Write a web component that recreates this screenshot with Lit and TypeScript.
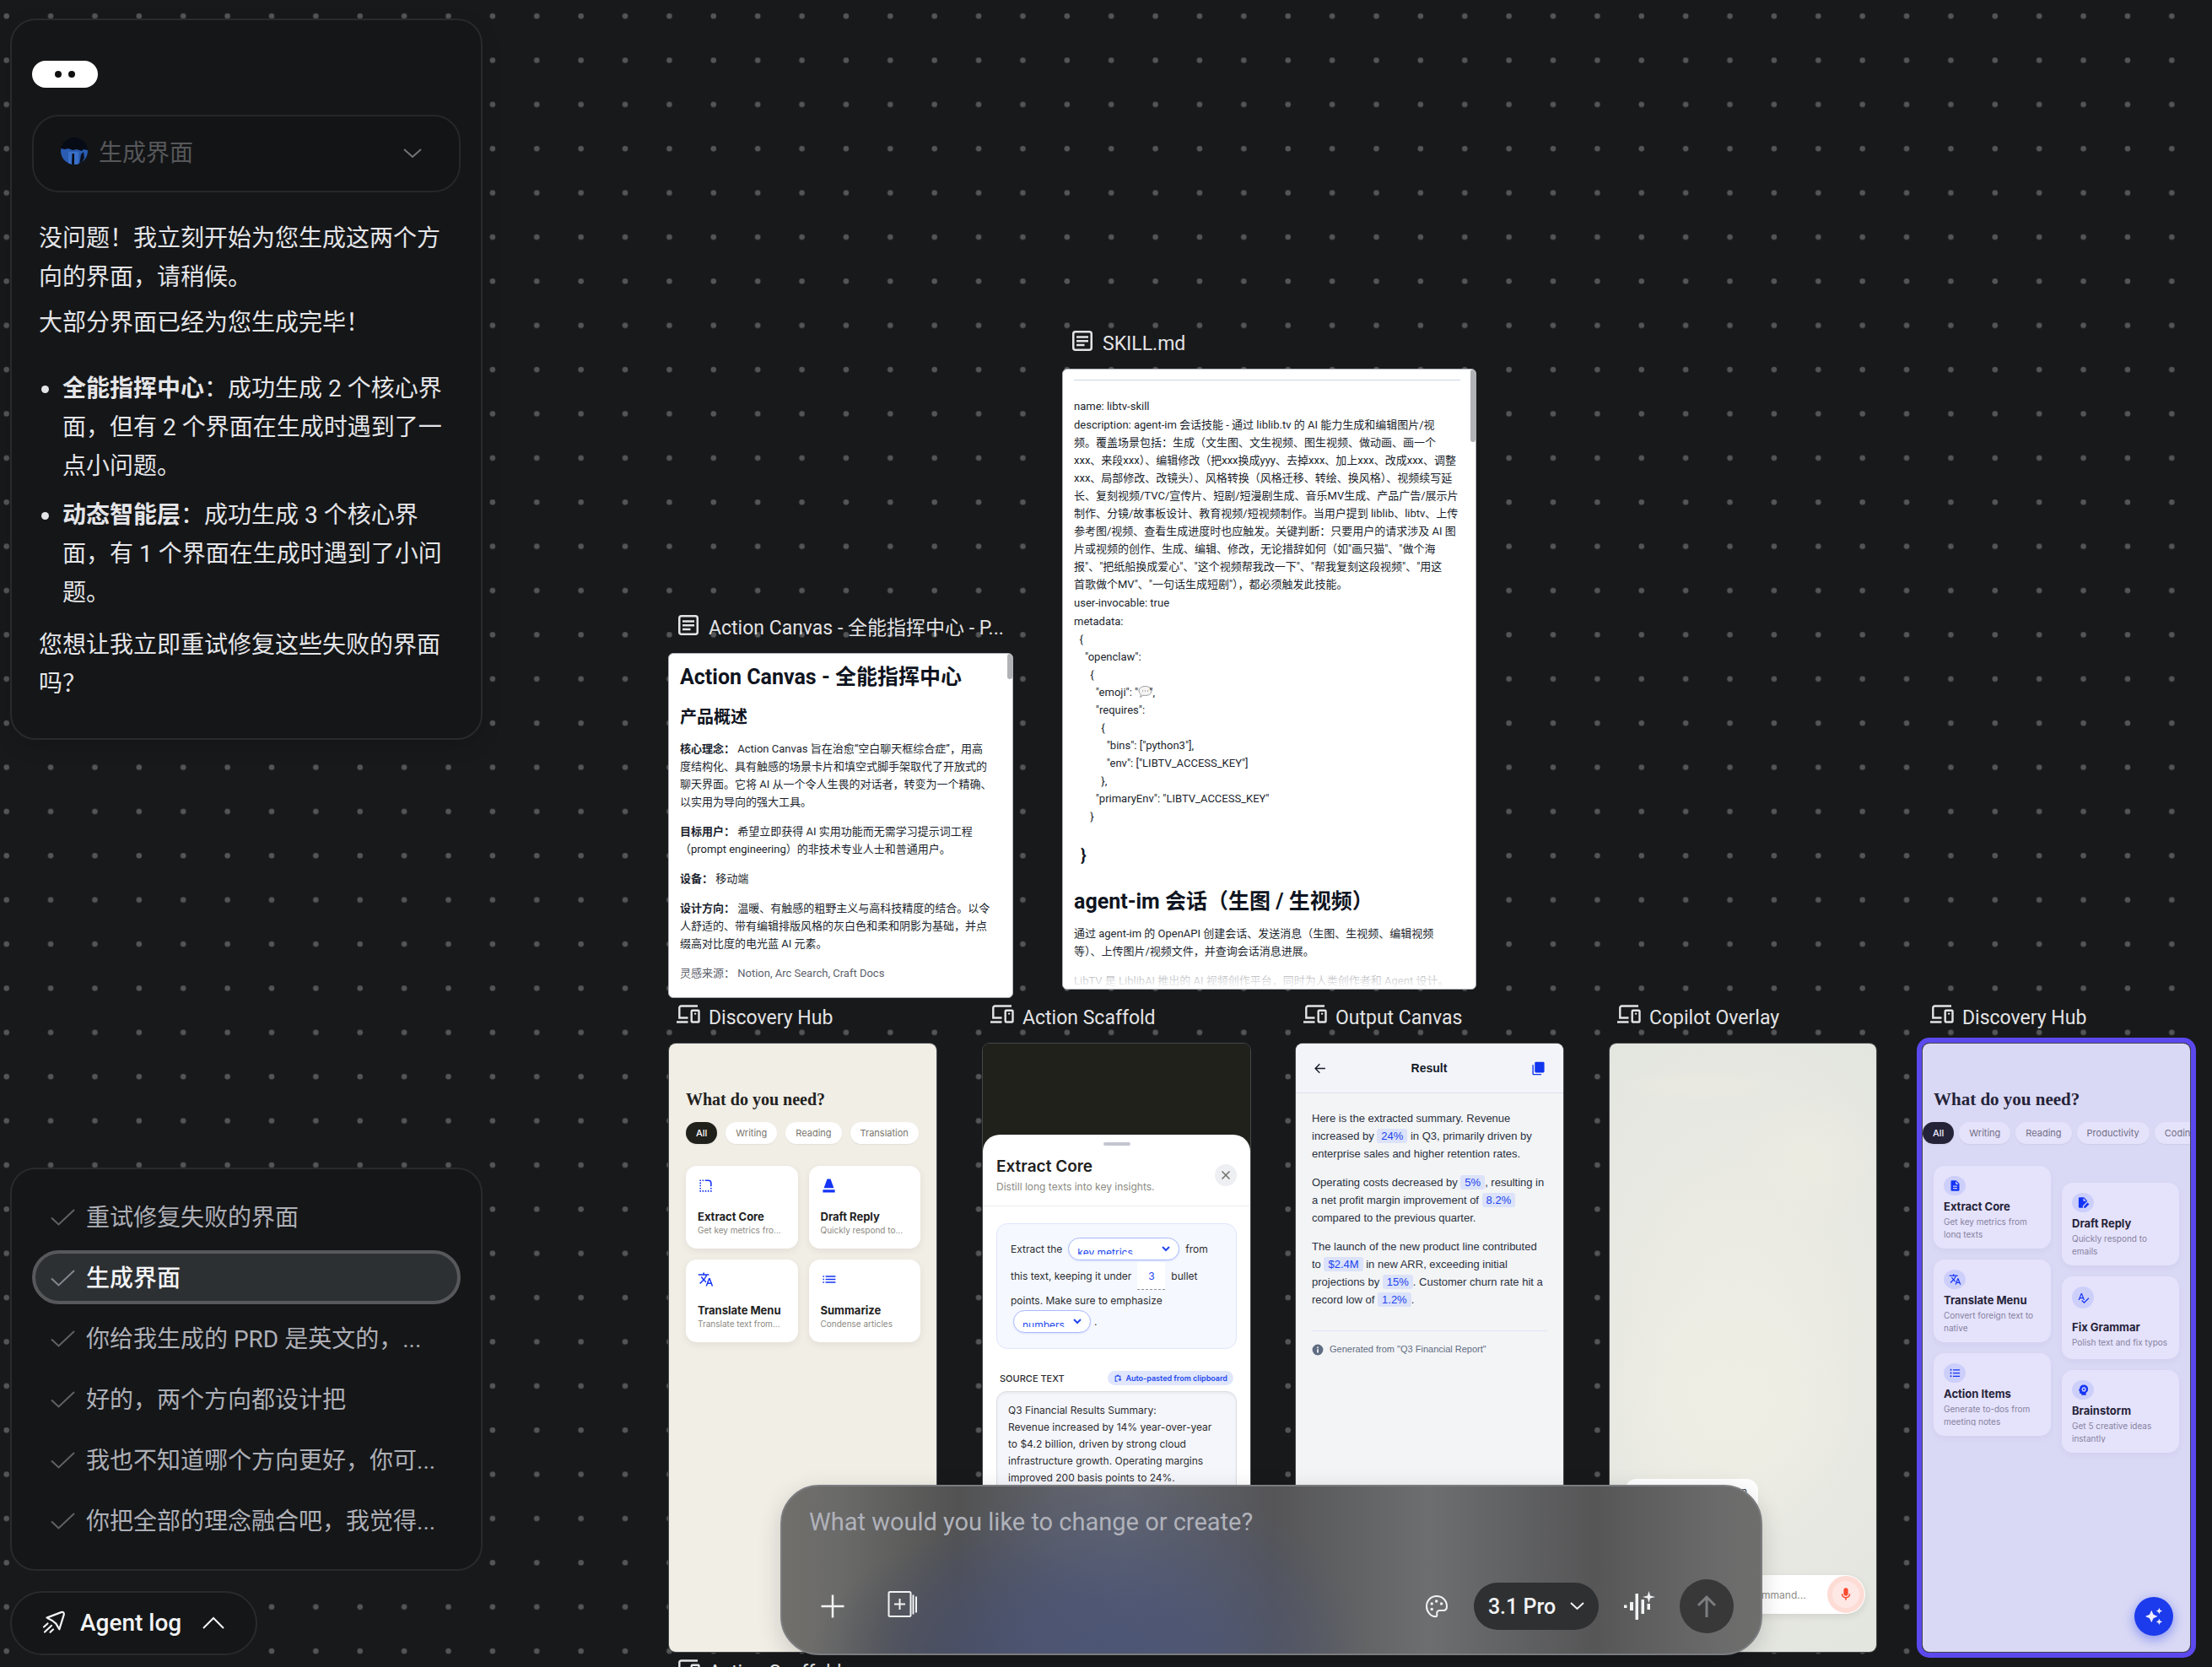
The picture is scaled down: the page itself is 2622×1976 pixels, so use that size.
import { LitElement, html, svg, css, nothing, TemplateResult } from "lit";
import { customElement, property, state } from "lit/decorators.js";
import { classMap } from "lit/directives/class-map.js";
import { styleMap } from "lit/directives/style-map.js";

const base = css`
  *,
  *::before,
  *::after {
    box-sizing: border-box;
  }
  button,
  input,
  select,
  textarea {
    font: inherit;
    color: inherit;
    margin: 0;
    padding: 0;
    border: 0;
    background: none;
    outline: none;
  }
  button {
    cursor: pointer;
  }
  h1,
  h2,
  h3,
  p,
  ul {
    margin: 0;
    padding: 0;
  }
  svg {
    display: block;
    flex: none;
  }
`;

/* ---------- icons ---------- */

const glyphs: Record<string, TemplateResult> = {
  translate: svg`<path d="M12.87 15.07l-2.54-2.51.03-.03A17.52 17.52 0 0 0 14.07 6H17V4h-7V2H8v2H1v2h11.17C11.5 7.92 10.44 9.75 9 11.35 8.07 10.32 7.3 9.19 6.69 8h-2c.73 1.63 1.73 3.17 2.98 4.56l-5.09 5.02L4 19l5-5 3.11 3.11.76-2.04zM18.5 10h-2L12 22h2l1.12-3h4.75L21 22h2l-4.5-12zm-2.62 7l1.62-4.33L19.12 17h-3.24z"/>`,
  list: svg`<path d="M3 8.5h2v-2H3zm0 4.5h2v-2H3zm0 4.5h2v-2H3zM7 6.5v2h15v-2zM7 13h15v-2H7zm0 4.5h15v-2H7z"/>`,
  bullets: svg`<circle cx="4" cy="6" r="1.6"/><circle cx="4" cy="12" r="1.6"/><circle cx="4" cy="18" r="1.6"/><path d="M8 5h13v2H8zm0 6h13v2H8zm0 6h13v2H8z"/>`,
  doc: svg`<path d="M14 2H6a2 2 0 0 0-2 2v16a2 2 0 0 0 2 2h12a2 2 0 0 0 2-2V8l-6-6zm2 16H8v-2h8v2zm0-4H8v-2h8v2zm-3-5V3.500L18.500 9H13z"/>`,
  docEdit: svg`<path d="M13 2H5a2 2 0 0 0-2 2v16a2 2 0 0 0 2 2h6v-4l8-8V8l-6-6zm-1 7V3.500L17.500 9H12z"/><path d="M13 22v-3l7-7 3 3-7 7z"/>`,
  spell: svg`<path d="M12.450 16h2.090L9.430 3H7.570L2.460 16h2.090l1.120-3h5.640zm-6.020-5L8.500 5.480 10.570 11zm15.160.590l-8.090 8.090L9.830 16l-1.410 1.410 5.090 5.090L23 13z"/>`,
  brain: svg`<path fill-rule="evenodd" d="M13 2.500A8 8 0 0 0 5 9.700l-2 3a.6.6 0 0 0 .5 1H5V17a2 2 0 0 0 2 2h1.500v3H17v-4.600A8 8 0 0 0 13 2.500zm0 3.500l1 1.300 1.700-.3.400 1.700 1.400.8-.9 1.500.9 1.500-1.400.8-.4 1.700-1.700-.3-1 1.300-1-1.300-1.700.3-.4-1.700-1.400-.8.900-1.500-.9-1.500 1.400-.8.400-1.700 1.700.3zm0 3.200a1.800 1.800 0 1 0 0 3.600 1.800 1.800 0 0 0 0-3.600z"/>`,
  corner: svg`<path d="M3 3h2v2H3zm4 0h2v2H7zM3 7h2v2H3zm0 4h2v2H3zm0 4h2v2H3zm0 4h2v2H3zm4 0h2v2H7zm4 0h2v2h-2zm4 0h2v2h-2zm4 0h2v2h-2zm0-4h2v2h-2zM11 3h5a5 5 0 0 1 5 5v5h-2V8a3 3 0 0 0-3-3h-5z"/>`,
  draft: svg`<path d="M9.500 2h5L19.500 15.500h-15zM3 18h18v4H3z"/>`,
  back: svg`<path d="M21 11H6.830l5.590-5.590L11 4l-8 8 8 8 1.410-1.410L6.830 13H21v-2z"/>`,
  copy: svg`<path d="M8 1h12a2 2 0 0 1 2 2v14a2 2 0 0 1-2 2H8a2 2 0 0 1-2-2V3a2 2 0 0 1 2-2zM2 6h2v15h13v2H4a2 2 0 0 1-2-2z"/>`,
  info: svg`<path fill-rule="evenodd" d="M12 1a11 11 0 1 0 0 22 11 11 0 0 0 0-22zm-1.500 5h3v3h-3zm0 4.500h3V18h-3z"/>`,
  mic: svg`<path d="M12 14a3.500 3.500 0 0 0 3.500-3.500V5a3.500 3.500 0 0 0-7 0v5.500A3.500 3.500 0 0 0 12 14zm5-3a5 5 0 0 1-10 0H5a7 7 0 0 0 6 6.920V21h2v-3.080A7 7 0 0 0 19 11h-2z"/>`,
  sparkle: svg`<path d="M19 9l1.250-2.750L23 5l-2.750-1.250L19 1l-1.250 2.750L15 5l2.750 1.250zm-7.500.5L9 4 6.500 9.500 1 12l5.500 2.500L9 20l2.500-5.500L17 12zM19 15l-1.250 2.750L15 19l2.750 1.250L19 23l1.250-2.750L23 19l-2.750-1.250z"/>`,
  paste: svg`<path d="M9 2h6v2h5v8h-2.500V6.500H6.500v12H11V21H4V4h5zM13 14h5l-2-2 1.600-1.500L22.500 15l-4.900 4.500L16 18l2-2h-5z"/>`,
};

const icon = (name: string, size: number) =>
  html`<svg width=${size} height=${size} viewBox="0 0 24 24" fill="currentColor" aria-hidden="true">${glyphs[name]}</svg>`;

const docLabelIcon = html`<svg width="28" height="24" viewBox="0 0 28 24" fill="none" stroke="currentColor" stroke-width="2.500" aria-hidden="true">
  <rect x="3.250" y="1.250" width="21.500" height="21.500" rx="2.500" />
  <path d="M7 7.500h14M7 12.200h14M7 17h9.500" />
</svg>`;

const screenLabelIcon = html`<svg width="28" height="24" viewBox="0 0 28 24" fill="none" stroke="currentColor" stroke-width="2.400" aria-hidden="true">
  <path d="M25 1.500H5.500a2.200 2.200 0 0 0-2.200 2.200V15.500H13.500M0 20.500h13.500" />
  <rect x="17.700" y="6.700" width="8.800" height="13.800" rx="1" />
  <circle cx="22.100" cy="10.600" r="1.200" fill="currentColor" stroke="none" />
</svg>`;

const chevron = (w: number, h: number, stroke: number, up = false) =>
  html`<svg width=${w} height=${h} viewBox="0 0 ${w} ${h}" fill="none" stroke="currentColor" stroke-width=${stroke} aria-hidden="true">
    <path d=${up ? `M1 ${h - 1}L${w / 2} 2L${w - 1} ${h - 1}` : `M1 1L${w / 2} ${h - 2}L${w - 1} 1`} />
  </svg>`;

/* ---------- agent log column ---------- */

const steps = [
  "重试修复失败的界面",
  "生成界面",
  "你给我生成的 PRD 是英文的，...",
  "好的，两个方向都设计把",
  "我也不知道哪个方向更好，你可...",
  "你把全部的理念融合吧，我觉得...",
];

@customElement("agent-log")
export class AgentLog extends LitElement {
  @state() private current = 1;

  static styles = [
    base,
    css`
      :host {
        display: flex;
        flex-direction: column;
        color: #e4e5e8;
        font-size: 28px;
      }
      .panel {
        background: #151618;
        border: 2px solid #292a2c;
        border-radius: 30px;
      }
      .reply {
        padding: 48px 24px 41px;
        display: flex;
        flex-direction: column;
        box-shadow: 0 8px 24px rgba(0, 0, 0, 0.12);
      }
      .face {
        width: 78px;
        height: 32px;
        border-radius: 16px;
        background: #fff;
        display: flex;
        align-items: center;
        justify-content: center;
        gap: 8px;
      }
      .eye {
        width: 8px;
        height: 8px;
        border-radius: 50%;
        background: #101010;
      }
      .task {
        margin-top: 32px;
        height: 92px;
        padding: 0 44px 6px 32px;
        border: 2px solid #262729;
        border-radius: 32px;
        background: #131416;
        display: flex;
        align-items: center;
        gap: 13px;
        color: #56575a;
        text-align: left;
      }
      .task > svg:last-child {
        margin-top: 6px;
        color: #737578;
      }
      .task-name {
        flex: 1;
      }
      .text {
        margin-top: 32px;
        padding: 0 14px 0 8px;
        line-height: 46px;
      }
      .text p + p {
        margin-top: 8px;
      }
      .text ul {
        list-style: none;
        margin: 32px 0 16px;
        display: flex;
        flex-direction: column;
        gap: 12px;
      }
      .text li {
        display: flex;
      }
      .text li::before {
        content: "";
        flex: none;
        width: 9px;
        height: 9px;
        border-radius: 50%;
        background: currentColor;
        margin: 19px 16px 0 3px;
      }
      .spacer {
        flex: 1;
      }
      .steps {
        padding: 24px 24px 26px;
        display: flex;
        flex-direction: column;
        gap: 8px;
      }
      .step {
        height: 64px;
        border: 4px solid transparent;
        border-radius: 32px;
        padding: 0 18px 2px;
        display: flex;
        align-items: center;
        gap: 13px;
        color: #adafb6;
        white-space: nowrap;
        overflow: hidden;
        text-align: left;
      }
      .step svg {
        color: #606265;
        margin-top: 4px;
      }
      .step.on {
        background: #2d3033;
        border-color: #57585b;
        color: #f3f4f6;
        font-weight: 500;
      }
      .step.on svg {
        color: #85888c;
      }
      .toggle {
        align-self: flex-start;
        margin-top: 24px;
        height: 76px;
        padding: 0 37px 2px 36px;
        border-radius: 38px;
        display: flex;
        align-items: center;
        gap: 17px;
        color: #f1f3f4;
        font-weight: 500;
      }
      .toggle svg:last-child {
        margin-left: 8px;
      }
    `,
  ];

  render() {
    return html`
      <section class="panel reply">
        <div class="face"><span class="eye"></span><span class="eye"></span></div>
        <button class="task" type="button">
          <svg width="32" height="32" viewBox="0 0 32 32" aria-hidden="true">
            <clipPath id="disc"><circle cx="16" cy="16" r="16" /></clipPath>
            <g clip-path="url(#disc)">
              <rect width="32" height="32" fill="#060b16" />
              <path d="M0 13l5 1 4-1 5 2 5-1 6 2 2-2 5 1v17H0z" fill="#2a5cb2" />
              <path d="M9 17h12v15H9z" fill="#3a70c8" />
              <path d="M13.500 19h2.500v13h-3z" fill="#070c18" />
              <path d="M24 20l3-3 1 7-4 8h-2z" fill="#0a1020" />
            </g>
          </svg>
          <span class="task-name">生成界面</span>
          ${chevron(22, 12, 2)}
        </button>
        <div class="text">
          <p>没问题！我立刻开始为您生成这两个方向的界面，请稍候。</p>
          <p>大部分界面已经为您生成完毕！</p>
          <ul>
            <li><span><strong>全能指挥中心</strong>：成功生成 2 个核心界面，但有 2 个界面在生成时遇到了一点小问题。</span></li>
            <li><span><strong>动态智能层</strong>：成功生成 3 个核心界面，有 1 个界面在生成时遇到了小问题。</span></li>
          </ul>
          <p>您想让我立即重试修复这些失败的界面吗？</p>
        </div>
      </section>
      <div class="spacer"></div>
      <nav class="panel steps">
        ${steps.map(
          (s, i) => html`<button
            type="button"
            class=${classMap({ step: true, on: i === this.current })}
            @click=${() => (this.current = i)}
          >
            <svg width="29" height="20" viewBox="0 0 29 20" fill="none" stroke="currentColor" stroke-width="2" aria-hidden="true">
              <path d="M1 10.500L9.500 18.500L28 1" />
            </svg>
            ${s}
          </button>`
        )}
      </nav>
      <button class="panel toggle" type="button">
        <svg width="28" height="28" viewBox="0 0 28 28" fill="none" stroke="currentColor" stroke-width="2.200" stroke-linejoin="round" stroke-linecap="round" aria-hidden="true">
          <path d="M5.500 8.600L22.500 2.100q4-.9 3.200 3.100L20.300 22.300L16.400 15.600L12 12z" />
          <path d="M6.500 15.500L2 19.500M11 18L3 25.500M13 22.500l-3.500 3.300" />
        </svg>
        Agent log ${chevron(26, 15, 2, true)}
      </button>
    `;
  }
}

/* ---------- prompt bar ---------- */

@customElement("prompt-bar")
export class PromptBar extends LitElement {
  static styles = [
    base,
    css`
      :host {
        display: flex;
        flex-direction: column;
        justify-content: space-between;
        height: 202px;
        padding: 23px 32px 24px;
        border: 2px solid #7b7c7f;
        border-radius: 46px;
        color: #f1f3f4;
        background: radial-gradient(
            ellipse 300px 220px at 34% 106%,
            #4c5575 0%,
            rgba(76, 85, 117, 0.85) 35%,
            rgba(70, 75, 96, 0) 100%
          ),
          radial-gradient(ellipse 200px 160px at 20% 110%, #454857, rgba(69, 72, 87, 0)),
          linear-gradient(
            90deg,
            #706f6b 0%,
            #6a6a69 6%,
            #525252 18%,
            #5f6169 28%,
            #646770 35%,
            #555558 50%,
            #6d6e70 66%,
            #565657 83%,
            #6b6b6b 96%,
            #6e6e6d 100%
          );
        box-shadow: 0 8px 28px rgba(0, 0, 0, 0.16);
      }
      textarea {
        width: 100%;
        height: 40px;
        line-height: 38px;
        resize: none;
        overflow: hidden;
        font-size: 29px;
      }
      textarea::placeholder {
        color: #b0b2ba;
        opacity: 1;
      }
      .tools {
        display: flex;
        align-items: center;
        height: 64px;
      }
      .plain {
        height: 40px;
        display: flex;
        align-items: center;
        justify-content: center;
        padding: 0 14px;
      }
      .grow {
        flex: 1;
      }
      .sheet {
        margin-left: 23px;
        padding-bottom: 4px;
      }
      .model {
        height: 56px;
        width: 148px;
        border-radius: 28px;
        background: #2f3032;
        font-size: 25px;
        font-weight: 500;
        display: flex;
        align-items: center;
        justify-content: center;
        gap: 17px;
        margin: 0 14px 0 16px;
      }
      .send {
        width: 64px;
        height: 64px;
        border-radius: 50%;
        background: #383839;
        color: #7d7e80;
        display: flex;
        align-items: center;
        justify-content: center;
        margin-left: 14px;
      }
    `,
  ];

  render() {
    return html`
      <textarea aria-label="Prompt" placeholder="What would you like to change or create?"></textarea>
      <div class="tools">
        <button class="plain" type="button" aria-label="Add">
          <svg width="28" height="28" viewBox="0 0 28 28" fill="none" stroke="currentColor" stroke-width="2.500" aria-hidden="true">
            <path d="M14 0.500v27M0.500 14h27" />
          </svg>
        </button>
        <button class="plain sheet" type="button" aria-label="Add screens">
          <svg width="36" height="32" viewBox="0 0 36 32" fill="none" stroke="currentColor" stroke-width="2" aria-hidden="true">
            <rect x="1.500" y="1" width="26" height="29" rx="1.500" />
            <path d="M14.500 9v13M8 15.500h13M30.500 4.500v23M34 6.500v19" />
          </svg>
        </button>
        <span class="grow"></span>
        <button class="plain" type="button" aria-label="Theme">
          <svg width="28" height="28" viewBox="0 0 28 28" fill="none" stroke="currentColor" stroke-width="2" aria-hidden="true">
            <path d="M14 2C7.200 2 2 7.200 2 14s5 12.200 10.800 12.200c1.200 0 1.700-.9 1.500-2-.5-3 .3-5.200 3.200-5.200h4.300c2.700 0 4.200-1.700 4.200-5C26 7.200 20.800 2 14 2z" />
            <g fill="currentColor" stroke="none">
              <circle cx="8.200" cy="11" r="1.700" /><circle cx="13.700" cy="8" r="1.700" /><circle cx="19.600" cy="11" r="1.700" /><circle cx="8.200" cy="17.500" r="1.700" />
            </g>
          </svg>
        </button>
        <button class="model" type="button">3.1 Pro ${chevron(17, 10, 2)}</button>
        <button class="plain" type="button" aria-label="Voice">
          <svg width="40" height="36" viewBox="0 0 40 36" fill="currentColor" aria-hidden="true">
            <path d="M2 16.500h3.500v3.500H2zM9 13h4v10H9zM15.500 3h3.500v31h-3.500zM22.500 10h3.500v17h-3.500zM29.500 15h3.500v7h-3.500z" />
            <path d="M31.500 0l1.600 5.400L39 7l-5.900 1.600L31.500 14l-1.600-5.400L24 7l5.900-1.600z" />
          </svg>
        </button>
        <button class="send" type="button" aria-label="Send">
          <svg width="24" height="28" viewBox="0 0 24 28" fill="none" stroke="currentColor" stroke-width="3" aria-hidden="true">
            <path d="M12 27V3M2 13L12 3l10 10" />
          </svg>
        </button>
      </div>
    `;
  }
}

/* ---------- canvas node: a title line over a framed card ---------- */

@customElement("canvas-node")
export class CanvasNode extends LitElement {
  @property() label = "";
  @property() kind: "doc" | "screen" = "screen";
  @property({ type: Boolean }) selected = false;

  static styles = [
    base,
    css`
      :host {
        display: flex;
        flex-direction: column;
      }
      .title {
        height: 45px;
        padding-left: 10px;
        display: flex;
        align-items: flex-start;
        gap: 10px;
        font-size: 23px;
        line-height: 32px;
        color: #e3e4e6;
        white-space: nowrap;
        flex: none;
      }
      .frame {
        flex: 1;
        min-height: 0;
        display: flex;
        flex-direction: column;
        border: 1px solid #46474a;
        border-radius: 9px;
        overflow: hidden;
      }
      .frame.doc {
        border-color: #aeb2b8;
        border-radius: 6px;
        background: #fff;
      }
      .frame.selected {
        box-shadow: 0 0 0 6px #5b49ee;
      }
    `,
  ];

  render() {
    return html`
      <div class="title">${this.kind === "doc" ? docLabelIcon : screenLabelIcon}<span>${this.label}</span></div>
      <div class=${classMap({ frame: true, doc: this.kind === "doc", selected: this.selected })}><slot></slot></div>
    `;
  }
}

/* ---------- page ---------- */

interface Tool {
  icon: string;
  name: string;
  text: string;
}

const hubTools: Tool[] = [
  { icon: "corner", name: "Extract Core", text: "Get key metrics fro..." },
  { icon: "draft", name: "Draft Reply", text: "Quickly respond to..." },
  { icon: "translate", name: "Translate Menu", text: "Translate text from..." },
  { icon: "list", name: "Summarize", text: "Condense articles" },
];

const leftTools: Tool[] = [
  { icon: "doc", name: "Extract Core", text: "Get key metrics from long texts" },
  { icon: "translate", name: "Translate Menu", text: "Convert foreign text to native" },
  { icon: "bullets", name: "Action Items", text: "Generate to-dos from meeting notes" },
];

const rightTools: Tool[] = [
  { icon: "docEdit", name: "Draft Reply", text: "Quickly respond to emails" },
  { icon: "spell", name: "Fix Grammar", text: "Polish text and fix typos" },
  { icon: "brain", name: "Brainstorm", text: "Get 5 creative ideas instantly" },
];

const description = `description: agent-im 会话技能 - 通过 liblib.tv 的 AI 能力生成和编辑图片/视
频。覆盖场景包括：生成（文生图、文生视频、图生视频、做动画、画一个
xxx、来段xxx）、编辑修改（把xxx换成yyy、去掉xxx、加上xxx、改成xxx、调整
xxx、局部修改、改镜头）、风格转换（风格迁移、转绘、换风格）、视频续写延
长、复刻视频/TVC/宣传片、短剧/短漫剧生成、音乐MV生成、产品广告/展示片
制作、分镜/故事板设计、教育视频/短视频制作。当用户提到 liblib、libtv、上传
参考图/视频、查看生成进度时也应触发。关键判断：只要用户的请求涉及 AI 图
片或视频的创作、生成、编辑、修改，无论措辞如何（如"画只猫"、"做个海
报"、"把纸船换成爱心"、"这个视频帮我改一下"、"帮我复刻这段视频"、"用这
首歌做个MV"、"一句话生成短剧"），都必须触发此技能。`;

const metaHead = `metadata:
  {
    "openclaw":
      {
        "emoji": "`;
const metaTail = `",
        "requires":
          {
            "bins": ["python3"],
            "env": ["LIBTV_ACCESS_KEY"]
          },
        "primaryEnv": "LIBTV_ACCESS_KEY"
      }`;

interface Node {
  x: number;
  y: number;
  w: number;
  h: number;
  label: string;
  kind?: "doc" | "screen";
  selected?: boolean;
  body: () => unknown;
}

@customElement("app-root")
export class AppRoot extends LitElement {
  static styles = [
    base,
    css`
      :host {
        display: block;
        position: relative;
        min-height: 100vh;
        overflow: hidden;
        background: #18191b;
        font-family: Roboto, "Noto Sans CJK SC", sans-serif;
      }
      .grid {
        position: absolute;
        inset: 0;
        width: 100%;
        height: 100%;
      }
      canvas-node {
        position: absolute;
      }
      agent-log {
        position: absolute;
        left: 12px;
        top: 22px;
        bottom: 14px;
        width: 560px;
      }
      prompt-bar {
        position: absolute;
        left: 925px;
        right: 533px;
        bottom: 14px;
      }

      /* documents */
      .doc {
        position: relative;
        flex: 1;
        min-height: 0;
        overflow: hidden;
        padding: 12px 13px 0;
        font-size: 13px;
        line-height: 21px;
        color: #1b1f2d;
      }
      .doc h1 {
        font-size: 25px;
        line-height: 32px;
        font-weight: 700;
        color: #0f1420;
      }
      .doc h2 {
        font-size: 20px;
        line-height: 28px;
        font-weight: 700;
        color: #0f1420;
        margin: 17px 0 13px;
      }
      .doc p + p {
        margin-top: 14px;
      }
      .doc .pre {
        white-space: pre;
      }
      .lines {
        display: flex;
        flex-direction: column;
        gap: 1px;
      }
      .rule {
        border: 0;
        border-top: 1px solid #cbd5e1;
        margin: 0 5px 20px 0;
      }
      .skill {
        padding-top: 12px;
      }
      .skill h2 {
        margin: 22px 0 25px 8px;
      }
      .skill h1 + p {
        margin-top: 11px;
      }
      .bubble {
        display: inline-block;
        vertical-align: -3px;
        margin-right: -4px;
      }
      .muted {
        color: #5d616c;
      }
      .fade::after {
        content: "";
        position: absolute;
        left: 0;
        right: 0;
        bottom: 0;
        height: 42px;
        background: linear-gradient(rgba(255, 255, 255, 0), #fff);
      }
      .skill > p:last-of-type {
        color: #4b4e58;
      }
      .thumb {
        position: absolute;
        top: 0;
        right: 0;
        width: 6px;
        height: 30px;
        border-radius: 3px;
        background: #b1b2b5;
      }
      .thumb.long {
        height: 86px;
      }

      /* hub screens */
      .hub {
        flex: 1;
        position: relative;
        font-family: Inter, sans-serif;
        background: #f1eee6;
        color: #22221e;
        overflow: hidden;
      }
      .hub h1 {
        font-family: "Liberation Serif", serif;
        font-size: 20px;
        line-height: 28px;
        font-weight: 700;
        margin: 52px 20px 13px;
      }
      .chips {
        display: flex;
        gap: 10px;
        padding: 0 20px;
        margin-bottom: 26px;
      }
      .chip {
        flex: none;
        height: 26px;
        padding: 0 12px;
        border-radius: 13px;
        background: #fff;
        color: #79766d;
        font-size: 11px;
        box-shadow: 0 1px 2px rgba(0, 0, 0, 0.06);
      }
      .chip.on {
        background: #21211c;
        color: #fff;
        font-weight: 500;
      }
      .tiles {
        display: grid;
        grid-template-columns: 1fr 1fr;
        gap: 13px;
        padding: 0 19px 0 20px;
      }
      .tile {
        height: 98px;
        padding: 14px;
        border-radius: 13px;
        background: #fff;
        box-shadow: 0 3px 8px rgba(60, 50, 20, 0.08);
        display: flex;
        flex-direction: column;
        justify-content: space-between;
        white-space: nowrap;
      }
      .tile h3 {
        font-size: 13px;
        line-height: 18px;
        font-weight: 700;
      }
      .tile p {
        font-size: 10px;
        line-height: 15px;
        color: #8c8a82;
      }
      .tile .ic {
        color: #1434f5;
      }
      .lilac {
        background: #dad9f5;
        color: #252338;
      }
      .lilac h1 {
        font-size: 21px;
        margin-left: 13px;
      }
      .lilac .chips {
        gap: 6px;
        padding: 0;
      }
      .lilac .chip {
        background: #e5e2fb;
        color: #716f85;
      }
      .lilac .chip.on {
        background: #252338;
        color: #eeecff;
      }
      .cols {
        display: grid;
        grid-template-columns: 1fr 1fr;
        gap: 13px;
        padding: 0 13px;
      }
      .col {
        display: flex;
        flex-direction: column;
        gap: 13px;
      }
      .col.low {
        margin-top: 20px;
      }
      .lilac .tile {
        padding: 12px;
        background: #e5e2fb;
        white-space: normal;
        box-shadow: 0 3px 8px rgba(60, 50, 140, 0.06);
      }
      .lilac .tile .ic {
        width: 26px;
        height: 26px;
        min-height: 22px;
        flex: 0 1 26px;
        border-radius: 50%;
        background: #cdcffb;
        display: flex;
        align-items: center;
        justify-content: center;
      }
      .lilac .tile h3 {
        line-height: 17px;
        margin-top: 5px;
      }
      .lilac .tile p {
        color: #8582a0;
        max-height: 27px;
        overflow: hidden;
        margin-top: 2px;
        flex: none;
      }
      .fab {
        position: absolute;
        right: 20px;
        bottom: 19px;
        width: 46px;
        height: 46px;
        border-radius: 50%;
        background: #1b3bec;
        color: #eeecff;
        display: flex;
        align-items: center;
        justify-content: center;
        box-shadow: 0 4px 14px rgba(40, 70, 240, 0.5);
      }

      /* action scaffold */
      .scaffold {
        flex: 1;
        display: flex;
        flex-direction: column;
        background: #21211c;
        padding-top: 108px;
        font-family: Inter, sans-serif;
        font-size: 12px;
        color: #2c2c30;
      }
      .sheet {
        flex: 1;
        background: #fff;
        border-radius: 20px 20px 0 0;
        display: flex;
        flex-direction: column;
        padding-top: 9px;
      }
      .handle {
        width: 32px;
        height: 4px;
        border-radius: 2px;
        background: #c4c5d2;
        align-self: center;
      }
      .sheet header {
        display: flex;
        align-items: center;
        justify-content: space-between;
        padding: 11px 16px 12px;
        border-bottom: 1px solid #eceef2;
      }
      .sheet h2 {
        font-size: 19px;
        line-height: 28px;
        font-weight: 600;
        color: #21211d;
      }
      .sheet header p {
        font-size: 12px;
        line-height: 20px;
        color: #8b8a83;
      }
      .close {
        width: 26px;
        height: 26px;
        border-radius: 50%;
        background: #eeeff3;
        color: #6f6e68;
        display: flex;
        align-items: center;
        justify-content: center;
      }
      .fill {
        margin: 20px 16px 0;
        padding: 16px 16px 18px;
        border: 1px solid #dfe6fd;
        border-radius: 13px;
        background: #f5f8ff;
        display: flex;
        flex-direction: column;
        gap: 2px;
      }
      .row {
        display: flex;
        align-items: center;
        gap: 7px;
        min-height: 20px;
        white-space: nowrap;
      }
      .row.in {
        gap: 4px;
        padding-left: 3px;
      }
      .pick {
        display: inline-grid;
        align-items: center;
        width: 132px;
      }
      .pick.small {
        width: 92px;
      }
      .pick select {
        grid-area: 1 / 1;
        appearance: none;
        width: 100%;
        height: 27px;
        padding: 6px 10px;
        line-height: 21px;
        border: 1px solid #a9bafb;
        border-radius: 14px;
        background: #fff;
        color: #2348ef;
        box-shadow: 0 1px 2px rgba(40, 70, 240, 0.12);
      }
      .pick svg {
        grid-area: 1 / 1;
        justify-self: end;
        margin-right: 11px;
        color: #2348ef;
        pointer-events: none;
      }
      .count {
        width: 33px;
        height: 33px;
        background: #fff;
        border-bottom: 1px dashed #8f909c;
        text-align: center;
        color: #2348ef;
      }
      .source {
        display: flex;
        justify-content: space-between;
        align-items: center;
        margin: 26px 20px 7px;
        font-size: 11px;
        font-weight: 500;
      }
      .badge {
        height: 17px;
        padding: 0 7px;
        border-radius: 9px;
        background: #e0e6fc;
        color: #2348ef;
        font-size: 9px;
        font-weight: 600;
        display: flex;
        align-items: center;
        gap: 4px;
      }
      .sheet textarea {
        flex: 1;
        margin: 0 16px 20px;
        padding: 12px 13px;
        border: 1px solid #dcdde2;
        border-radius: 12px;
        background: #f5f6fb;
        line-height: 20px;
        resize: none;
        overflow: hidden;
        white-space: pre;
        box-shadow: inset 0 2px 3px rgba(0, 0, 0, 0.05);
      }

      /* output canvas */
      .output {
        flex: 1;
        background: #f3f4f6;
        font-family: "Liberation Sans", sans-serif;
        font-size: 13px;
        line-height: 21px;
        color: #2a3140;
      }
      .output header {
        height: 59px;
        padding: 0 21px 0 20px;
        display: flex;
        align-items: center;
        justify-content: space-between;
        background: #f3f4f9;
        border-bottom: 1px solid #dfe1ea;
        color: #151b28;
      }
      .output h2 {
        font-size: 14px;
        font-weight: 700;
      }
      .output header button {
        display: flex;
      }
      .blue {
        color: #1134ee;
      }
      .output article {
        padding: 19px 18px 0 19px;
        display: flex;
        flex-direction: column;
        gap: 13px;
        white-space: nowrap;
      }
      mark {
        background: #dbe2f9;
        color: #2143ef;
        border-radius: 3px;
        padding: 1px 5px;
      }
      .origin {
        border-top: 1px solid #dfe3f2;
        margin: 26px 19px 0;
        padding-top: 11px;
        display: flex;
        align-items: center;
        gap: 7px;
        font-size: 11px;
        color: #5f6c82;
      }

      /* copilot overlay */
      .copilot {
        flex: 1;
        display: flex;
        flex-direction: column;
        justify-content: flex-end;
        align-items: flex-start;
        padding: 0 13px 45px 18px;
        gap: 73px;
        font-family: Inter, sans-serif;
        font-size: 12px;
        background: radial-gradient(ellipse 100px 18px at 34% 7%, #e9e9e1 40%, rgba(233, 233, 225, 0)),
          radial-gradient(ellipse 82px 80px at 75% 19%, #ecebe2 10%, rgba(236, 235, 226, 0)),
          radial-gradient(ellipse 150px 160px at 45% 60%, #eeeee4 10%, rgba(238, 238, 228, 0)),
          radial-gradient(ellipse 280px 420px at 48% 48%, #ecece4 20%, #e3e5df 100%);
      }
      .say {
        width: 158px;
        height: 41px;
        padding: 7px 13px;
        border-radius: 14px;
        background: #fff;
        text-align: right;
        color: #333;
      }
      .command {
        align-self: stretch;
        height: 46px;
        border-radius: 23px;
        background: #fff;
        display: flex;
        align-items: center;
        justify-content: space-between;
        padding: 0 1px 0 148px;
        box-shadow: 0 3px 10px rgba(0, 0, 0, 0.09);
      }
      .command input {
        flex: 1;
        min-width: 0;
        font-size: 12px;
      }
      .command input::placeholder {
        color: #8d8c86;
        opacity: 1;
      }
      .mic {
        width: 44px;
        height: 44px;
        border-radius: 50%;
        border: 6px solid #fedcd6;
        background: #fee8e5;
        color: #fa4a30;
        display: flex;
        align-items: center;
        justify-content: center;
      }
    `,
  ];

  private prd = () => html`<article class="doc">
    <h1>Action Canvas - 全能指挥中心</h1>
    <h2>产品概述</h2>
    <p class="pre"><strong>核心理念：</strong> Action Canvas 旨在治愈“空白聊天框综合症”，用高
度结构化、具有触感的场景卡片和填空式脚手架取代了开放式的
聊天界面。它将 AI 从一个令人生畏的对话者，转变为一个精确、
以实用为导向的强大工具。</p>
    <p class="pre"><strong>目标用户：</strong> 希望立即获得 AI 实用功能而无需学习提示词工程
（prompt engineering）的非技术专业人士和普通用户。</p>
    <p><strong>设备：</strong> 移动端</p>
    <p class="pre"><strong>设计方向：</strong> 温暖、有触感的粗野主义与高科技精度的结合。以令
人舒适的、带有编辑排版风格的灰白色和柔和阴影为基础，并点
缀高对比度的电光蓝 AI 元素。</p>
    <p class="muted">灵感来源： Notion, Arc Search, Craft Docs</p>
    <span class="thumb"></span>
  </article>`;

  private skill = () => html`<article class="doc skill fade">
    <hr class="rule" />
    <div class="lines">
      <div>name: libtv-skill</div>
      <div class="pre">${description}</div>
      <div>user-invocable: true</div>
      <div class="pre">${metaHead}<svg class="bubble" width="17" height="16" viewBox="0 0 17 16" fill="#f4f4f4" stroke="#9b9b9b" aria-hidden="true"><path d="M8.500 1.500c4.300 0 7.500 2.300 7.500 5.500s-3.200 5.500-7.500 5.500c-.9 0-1.700-.1-2.500-.3L2.500 14.500 3.500 11C1.800 10 1 8.600 1 7c0-3.200 3.200-5.500 7.500-5.500z"/><path d="M5 7h1M8 7h1M11 7h1" stroke="#666"/></svg>${metaTail}</div>
    </div>
    <h2>}</h2>
    <h1>agent-im 会话（生图 / 生视频）</h1>
    <p class="pre">通过 agent-im 的 OpenAPI 创建会话、发送消息（生图、生视频、编辑视频
等）、上传图片/视频文件，并查询会话消息进展。</p>
    <p class="pre">LibTV 是 LiblibAI 推出的 AI 视频创作平台，同时为人类创作者和 Agent 设计。</p>
    <span class="thumb long"></span>
  </article>`;

  private chips(names: string[]) {
    return html`<div class="chips">
      ${names.map((n, i) => html`<button type="button" class=${classMap({ chip: true, on: i === 0 })}>${n}</button>`)}
    </div>`;
  }

  private tile(t: Tool, size: number) {
    return html`<div class="tile">
      <span class="ic">${icon(t.icon, size)}</span>
      <div>
        <h3>${t.name}</h3>
        <p>${t.text}</p>
      </div>
    </div>`;
  }

  private hub = () => html`<section class="hub">
    <h1>What do you need?</h1>
    ${this.chips(["All", "Writing", "Reading", "Translation"])}
    <div class="tiles">${hubTools.map((t) => this.tile(t, 19))}</div>
  </section>`;

  private hubLilac = () => html`<section class="hub lilac">
    <h1>What do you need?</h1>
    ${this.chips(["All", "Writing", "Reading", "Productivity", "Coding"])}
    <div class="cols">
      <div class="col">${leftTools.map((t) => this.tile(t, 15))}</div>
      <div class="col low">${rightTools.map((t) => this.tile(t, 15))}</div>
    </div>
    <button class="fab" type="button" aria-label="Assistant">${icon("sparkle", 22)}</button>
  </section>`;

  private scaffold = () => html`<section class="scaffold">
    <div class="sheet">
      <span class="handle"></span>
      <header>
        <div>
          <h2>Extract Core</h2>
          <p>Distill long texts into key insights.</p>
        </div>
        <button class="close" type="button" aria-label="Close">
          <svg width="10" height="10" viewBox="0 0 10 10" fill="none" stroke="currentColor" stroke-width="1.500"><path d="M.5.5l9 9M9.500.5l-9 9" /></svg>
        </button>
      </header>
      <div class="fill">
        <div class="row">
          Extract the
          <span class="pick"><select aria-label="Focus"><option>key metrics</option></select>${chevron(10, 7, 2)}</span>
          from
        </div>
        <div class="row">
          this text, keeping it under
          <input class="count" aria-label="Bullet points" .value=${"3"} />
          bullet
        </div>
        <div class="row">points. Make sure to emphasize</div>
        <div class="row in">
          <span class="pick small"><select aria-label="Emphasis"><option>numbers</option></select>${chevron(10, 7, 2)}</span>
          .
        </div>
      </div>
      <div class="source">
        <label for="src">SOURCE TEXT</label>
        <span class="badge">${icon("paste", 10)} Auto-pasted from clipboard</span>
      </div>
      <textarea
        id="src"
        .value=${"Q3 Financial Results Summary:\nRevenue increased by 14% year-over-year\nto $4.2 billion, driven by strong cloud\ninfrastructure growth. Operating margins\nimproved 200 basis points to 24%."}
      ></textarea>
    </div>
  </section>`;

  private output = () => html`<section class="output">
    <header>
      <button type="button" aria-label="Back">${icon("back", 17)}</button>
      <h2>Result</h2>
      <button type="button" class="blue" aria-label="Copy">${icon("copy", 17)}</button>
    </header>
    <article>
      <p>Here is the extracted summary. Revenue<br />increased by <mark>24%</mark> in Q3, primarily driven by<br />enterprise sales and higher retention rates.</p>
      <p>Operating costs decreased by <mark>5%</mark>, resulting in<br />a net profit margin improvement of <mark>8.2%</mark><br />compared to the previous quarter.</p>
      <p>The launch of the new product line contributed<br />to <mark>$2.4M</mark> in new ARR, exceeding initial<br />projections by <mark>15%</mark>. Customer churn rate hit a<br />record low of <mark>1.2%</mark>.</p>
    </article>
    <div class="origin">${icon("info", 14)} Generated from "Q3 Financial Report"</div>
  </section>`;

  private copilot = () => html`<section class="copilot">
    <div class="say">n</div>
    <div class="command">
      <input aria-label="Command" placeholder="command..." />
      <button class="mic" type="button" aria-label="Speak">${icon("mic", 18)}</button>
    </div>
  </section>`;

  private nodes: Node[] = [
    { x: 792, y: 729, w: 409, h: 454, label: "Action Canvas - 全能指挥中心 - P...", kind: "doc", body: this.prd },
    { x: 1259, y: 392, w: 491, h: 781, label: "SKILL.md", kind: "doc", body: this.skill },
    { x: 792, y: 1191, w: 319, h: 768, label: "Discovery Hub", body: this.hub },
    { x: 1164, y: 1191, w: 319, h: 768, label: "Action Scaffold", body: this.scaffold },
    { x: 1535, y: 1191, w: 319, h: 768, label: "Output Canvas", body: this.output },
    { x: 1907, y: 1191, w: 318, h: 768, label: "Copilot Overlay", body: this.copilot },
    { x: 2278, y: 1191, w: 319, h: 768, label: "Discovery Hub", selected: true, body: this.hubLilac },
    { x: 792, y: 1967, w: 319, h: 768, label: "Action Scaffold", body: () => nothing },
  ];

  render() {
    return html`
      <svg class="grid" aria-hidden="true">
        <defs>
          <pattern id="dots" width="52.380" height="52.380" patternUnits="userSpaceOnUse">
            <circle cx="7.700" cy="19" r="3.300" fill="#545557" />
          </pattern>
        </defs>
        <rect width="100%" height="100%" fill="url(#dots)" />
      </svg>
      ${this.nodes.map(
        (n) => html`<canvas-node
          .label=${n.label}
          .kind=${n.kind ?? "screen"}
          .selected=${!!n.selected}
          style=${styleMap({ left: `${n.x}px`, top: `${n.y}px`, width: `${n.w}px`, height: `${n.h}px` })}
          >${n.body()}</canvas-node
        >`
      )}
      <agent-log></agent-log>
      <prompt-bar></prompt-bar>
    `;
  }
}
